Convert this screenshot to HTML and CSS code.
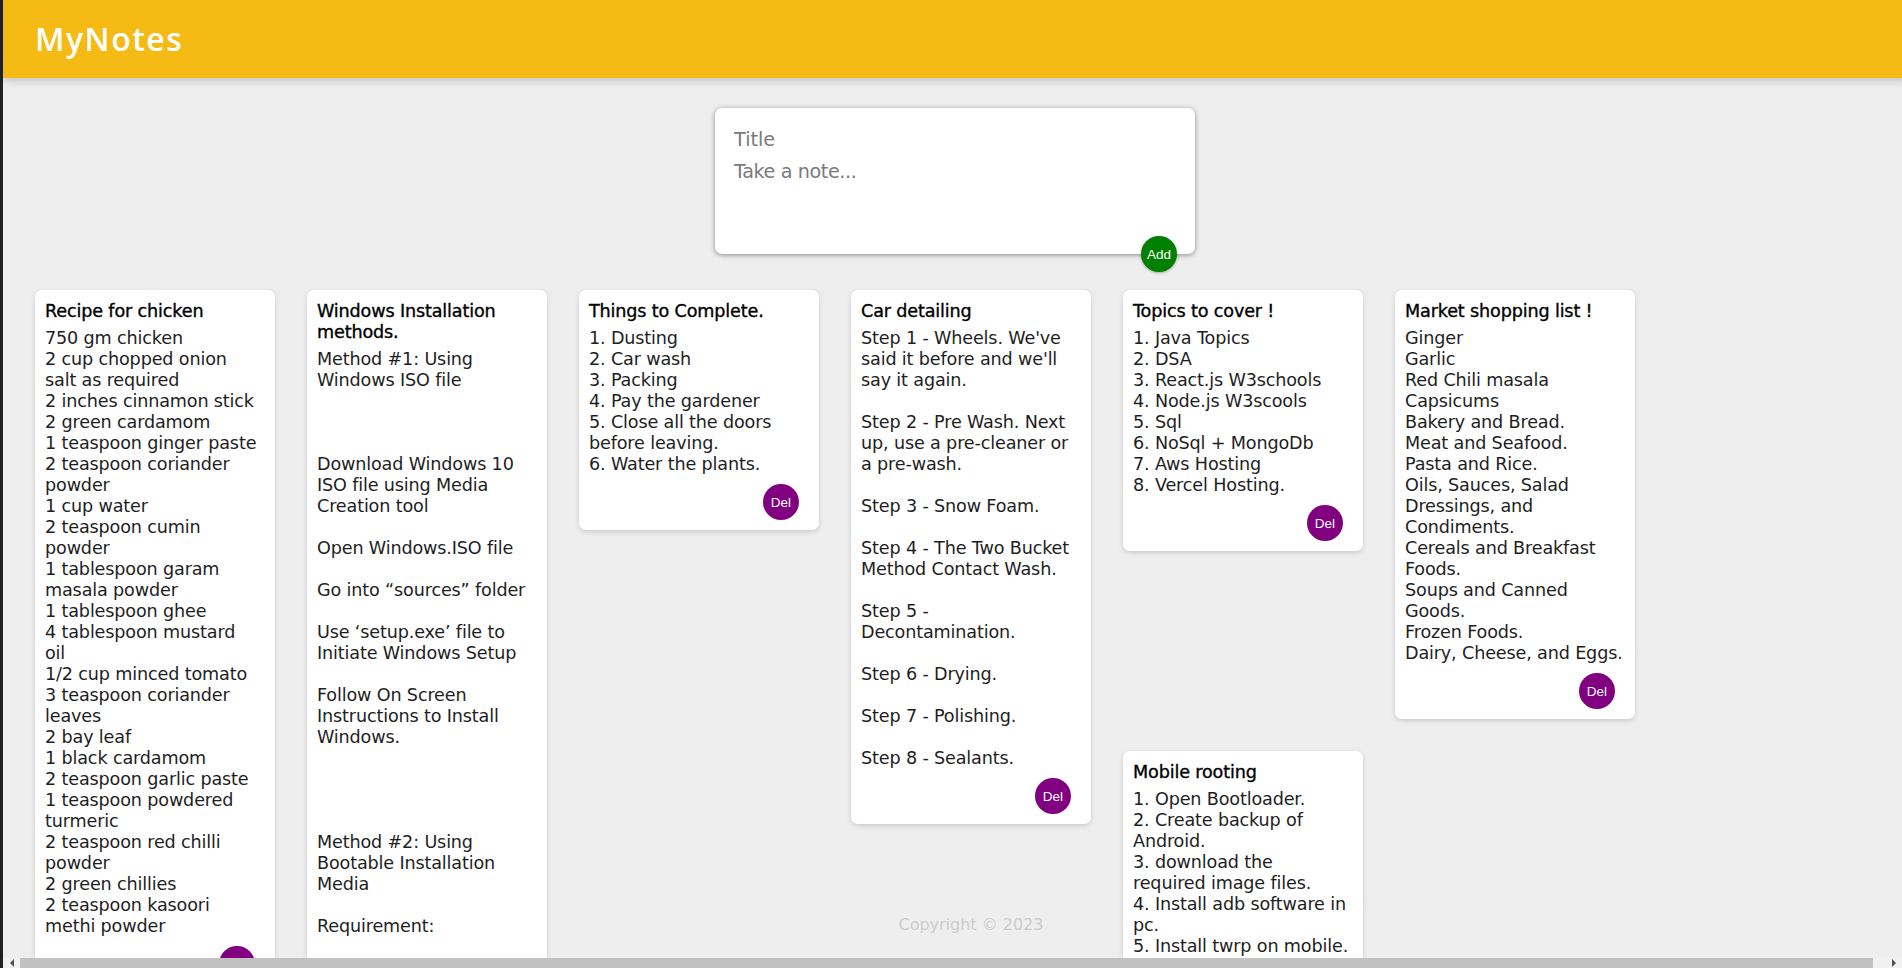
FILE: index.html
```html
<!DOCTYPE html>
<html lang="en">
<head>
<meta charset="utf-8">
<title>MyNotes</title>
<link rel="stylesheet" href="styles.css">
</head>
<body>
<header class="header">
  <h1 class="brand">MyNotes</h1>
</header>

<form class="create-note">
  <input class="create-title" name="title" placeholder="Title">
  <textarea class="create-content" name="content" placeholder="Take a note..." rows="3"></textarea>
  <button class="add-btn" type="button">Add</button>
</form>

<div class="note">
  <h1 class="note-title">Recipe for chicken</h1>
  <p class="note-text">750 gm chicken
2 cup chopped onion
salt as required
2 inches cinnamon stick
2 green cardamom
1 teaspoon ginger paste
2 teaspoon coriander
powder
1 cup water
2 teaspoon cumin
powder
1 tablespoon garam
masala powder
1 tablespoon ghee
4 tablespoon mustard
oil
1/2 cup minced tomato
3 teaspoon coriander
leaves
2 bay leaf
1 black cardamom
2 teaspoon garlic paste
1 teaspoon powdered
turmeric
2 teaspoon red chilli
powder
2 green chillies
2 teaspoon kasoori
methi powder</p>
  <button class="del-btn" type="button">Del</button>
</div>

<div class="note">
  <h1 class="note-title">Windows Installation
methods.</h1>
  <p class="note-text">Method #1: Using
Windows ISO file



Download Windows 10
ISO file using Media
Creation tool

Open Windows.ISO file

Go into “sources” folder

Use ‘setup.exe’ file to
Initiate Windows Setup

Follow On Screen
Instructions to Install
Windows.




Method #2: Using
Bootable Installation
Media

Requirement:

A USB flash drive with
at least 8GB of space.</p>
  <button class="del-btn" type="button">Del</button>
</div>

<div class="note">
  <h1 class="note-title">Things to Complete.</h1>
  <p class="note-text">1. Dusting
2. Car wash
3. Packing
4. Pay the gardener
5. Close all the doors
before leaving.
6. Water the plants.</p>
  <button class="del-btn" type="button">Del</button>
</div>

<div class="note">
  <h1 class="note-title">Car detailing</h1>
  <p class="note-text">Step 1 - Wheels. We've
said it before and we'll
say it again.

Step 2 - Pre Wash. Next
up, use a pre-cleaner or
a pre-wash.

Step 3 - Snow Foam.

Step 4 - The Two Bucket
Method Contact Wash.

Step 5 -
Decontamination.

Step 6 - Drying.

Step 7 - Polishing.

Step 8 - Sealants.</p>
  <button class="del-btn" type="button">Del</button>
</div>

<div class="note">
  <h1 class="note-title">Topics to cover !</h1>
  <p class="note-text">1. Java Topics
2. DSA
3. React.js W3schools
4. Node.js W3scools
5. Sql
6. NoSql + MongoDb
7. Aws Hosting
8. Vercel Hosting.</p>
  <button class="del-btn" type="button">Del</button>
</div>

<div class="note">
  <h1 class="note-title">Market shopping list !</h1>
  <p class="note-text">Ginger
Garlic
Red Chili masala
Capsicums
Bakery and Bread.
Meat and Seafood.
Pasta and Rice.
Oils, Sauces, Salad
Dressings, and
Condiments.
Cereals and Breakfast
Foods.
Soups and Canned
Goods.
Frozen Foods.
Dairy, Cheese, and Eggs.</p>
  <button class="del-btn" type="button">Del</button>
</div>

<div class="note">
  <h1 class="note-title">Mobile rooting</h1>
  <p class="note-text">1. Open Bootloader.
2. Create backup of
Android.
3. download the
required image files.
4. Install adb software in
pc.
5. Install twrp on mobile.
6. Flash the root
package.</p>
  <button class="del-btn" type="button">Del</button>
</div>

<footer class="footer">
  <p class="copyright">Copyright © 2023</p>
</footer>

<div class="hscroll" aria-hidden="true">
  <span class="hs-arrow hs-left"></span>
  <span class="hs-thumb"></span>
  <span class="hs-arrow hs-right"></span>
</div>
</body>
</html>
```

FILE: styles.css
```css
* {
  margin: 0;
  padding: 0;
  box-sizing: border-box;
}

html {
  background: #202124;
  overflow: hidden;
}

body {
  margin-left: 3px;
  width: 1904px;
  min-height: 100vh;
  padding: 0 16px;
  background: #eeeeee;
  font-family: "DejaVu Sans", sans-serif;
  color: #1e1e1e;
}

/* Header */
.header {
  margin: 0 -16px;
  padding: 16px 32px;
  background-color: #f5ba13;
  box-shadow: 0 0 10px 0 rgba(0, 0, 0, 0.3);
}

.brand {
  font-family: "Open Sans", sans-serif;
  font-size: 32px;
  font-weight: 600;
  line-height: 46px;
  letter-spacing: 1.5px;
  color: #ffffff;
}

/* Create note form */
.create-note {
  position: relative;
  width: 480px;
  margin: 30px auto 20px auto;
  padding: 15px;
  background: #ffffff;
  border-radius: 7px;
  box-shadow: 0 1px 5px rgb(138, 137, 137);
}

.create-title,
.create-content {
  display: block;
  width: 100%;
  border: none;
  outline: none;
  resize: none;
  font-family: inherit;
  font-size: 19.2px;
  color: #222;
  background: transparent;
}

.create-title {
  height: 31px;
  padding: 5px 4px 3px;
  line-height: 23px;
}

.create-content {
  height: 85px;
  padding: 6px 4px 2px;
  line-height: 23px;
  letter-spacing: -0.4px;
}

.create-title::placeholder,
.create-content::placeholder {
  color: #7a7a7a;
}

.add-btn {
  position: absolute;
  right: 18px;
  bottom: -18px;
  width: 36px;
  height: 36px;
  border: none;
  border-radius: 50%;
  background: #008000;
  color: #ffffff;
  font-family: "Liberation Sans", Arial, sans-serif;
  font-size: 13.5px;
  box-shadow: 0 1px 3px rgba(0, 0, 0, 0.3);
  cursor: pointer;
}

/* Notes */
.note {
  float: left;
  width: 240px;
  margin: 16px;
  padding: 10px;
  background: #ffffff;
  border-radius: 7px;
  box-shadow: 0 2px 5px #cccccc;
}

.note-title {
  font-size: 17.6px;
  font-weight: 400;
  line-height: 21px;
  padding-top: 1px;
  margin-bottom: 5px;
  color: #000000;
  white-space: pre;
  letter-spacing: -0.15px;
  -webkit-text-stroke: 0.35px #000000;
}

.note-text {
  font-size: 17.6px;
  line-height: 21px;
  padding-top: 1px;
  margin-bottom: 9px;
  white-space: pre;
  letter-spacing: -0.15px;
  color: #1e1e1e;
}

.del-btn {
  float: right;
  margin-right: 10px;
  width: 36px;
  height: 36px;
  border: none;
  border-radius: 50%;
  background: #800080;
  color: #ffffff;
  font-family: "Liberation Sans", Arial, sans-serif;
  font-size: 13.5px;
  cursor: pointer;
}

/* Footer */
.footer {
  position: absolute;
  top: 915px;
  width: 1904px;
  height: 40px;
  text-align: center;
}

.copyright {
  font-size: 16px;
  line-height: 20px;
  color: #cccccc;
}

/* Window horizontal scrollbar (overlay at the bottom edge) */
.hscroll {
  position: fixed;
  left: 3px;
  right: 0;
  bottom: 0;
  height: 10px;
  display: flex;
  align-items: center;
  background: #f1f1f1;
}

.hs-arrow {
  width: 17px;
  height: 10px;
  display: flex;
  align-items: center;
  justify-content: center;
}

.hs-left::before {
  content: "";
  border-top: 4px solid transparent;
  border-bottom: 4px solid transparent;
  border-right: 4px solid #505050;
}

.hs-right::before {
  content: "";
  border-top: 4px solid transparent;
  border-bottom: 4px solid transparent;
  border-left: 4px solid #505050;
}

.hs-thumb {
  flex: 1;
  height: 10px;
  margin-right: 12px;
  background: #c1c1c1;
}
```
